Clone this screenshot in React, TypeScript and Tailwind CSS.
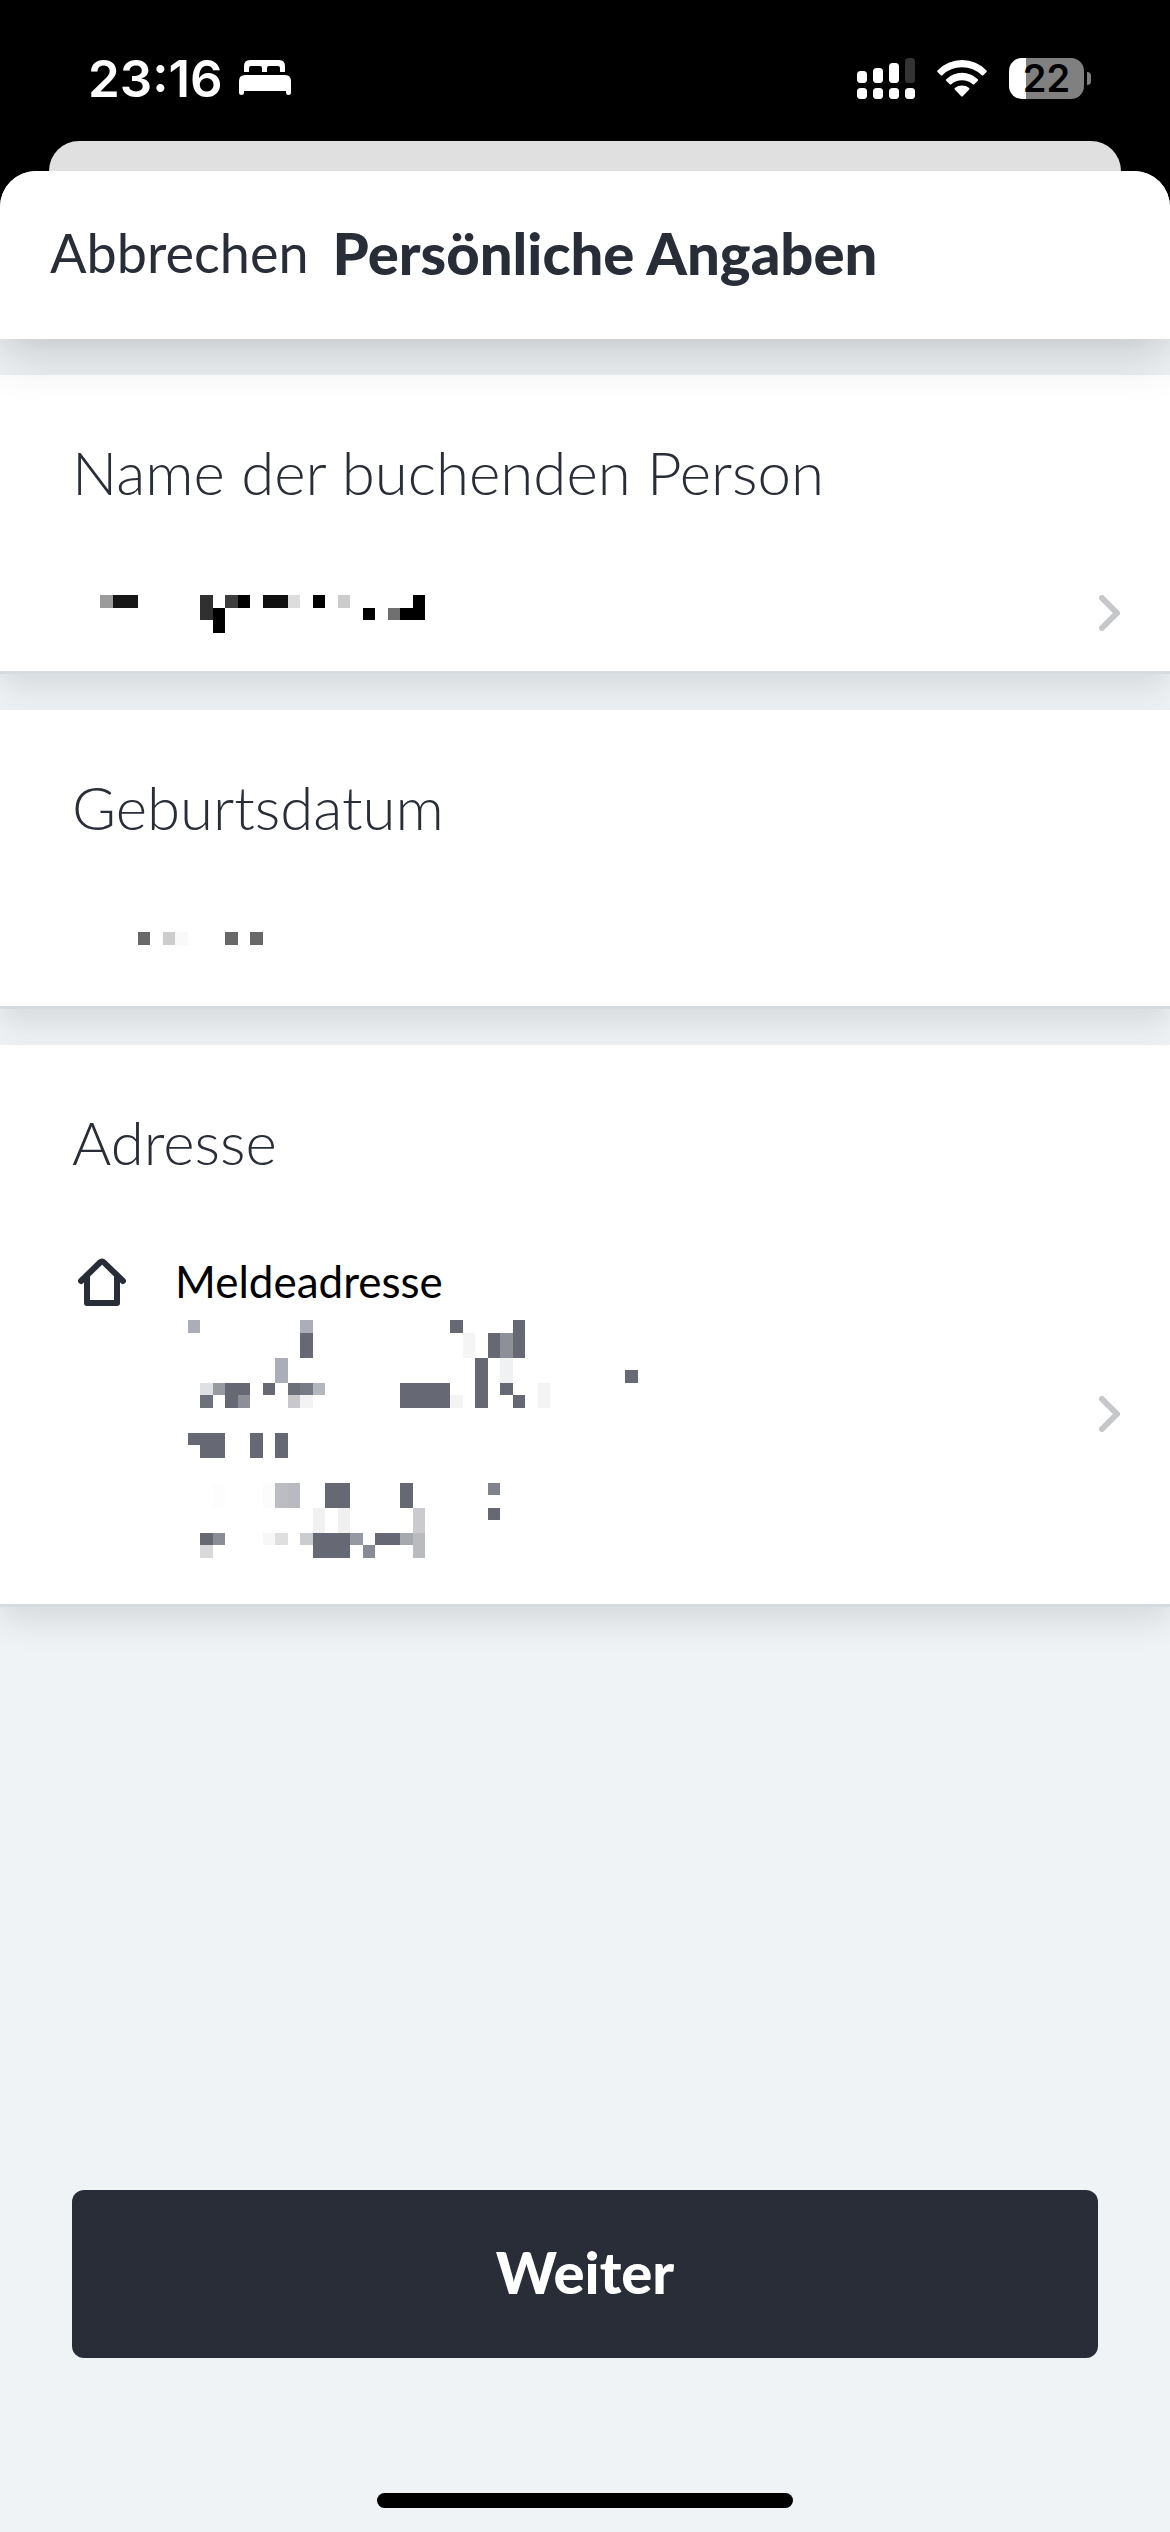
import React from "react";

// column, row, width, height, colour
type Block = [number, number, number, number, string];

const DARK = "#666973";

const nameBlocks: Block[] = [
  [0, 0, 1, 1, "#9b9b9b"],
  [1, 0, 2, 1, "#161616"],
  [8, 0, 1, 2, "#303030"],
  [9, 1, 1, 2, "#000000"],
  [10, 0, 1, 1, "#3d3d3d"],
  [11, 0, 1, 1, "#000000"],
  [13, 0, 2, 1, "#101010"],
  [15, 0, 1, 1, "#dddddd"],
  [17, 0, 1, 1, "#000000"],
  [19, 0, 1, 1, "#cccccc"],
  [21, 1, 1, 1, "#000000"],
  [23, 1, 1, 1, "#707070"],
  [24, 1, 2, 1, "#000000"],
  [25, 0, 1, 1, "#000000"],
];

const birthBlocks: Block[] = [
  [3, 0, 1, 1, "#686868"],
  [5, 0, 1, 1, "#cdcdcd"],
  [6, 0, 1, 1, "#f9f9f9"],
  [10, 0, 1, 1, "#686868"],
  [12, 0, 1, 1, "#686868"],
];

const addressBlocks: Block[] = [
  [1, 0, 1, 1, "#abaeb8"],
  [10, 0, 1, 1, "#abaeb8"],
  [10, 1, 1, 2, DARK],
  [22, 0, 1, 1, DARK],
  [23, 1, 1, 2, "#f5f5f5"],
  [25, 1, 1, 2, DARK],
  [26, 1, 1, 2, "#8d9197"],
  [27, 0, 1, 3, DARK],
  [8, 3, 1, 2, "#abaeb8"],
  [24, 3, 1, 4, DARK],
  [26, 3, 1, 2, "#f0f1f3"],
  [36, 4, 1, 1, DARK],
  [2, 5, 1, 1, "#dfe0e1"],
  [3, 5, 1, 1, "#979aa1"],
  [4, 5, 2, 1, DARK],
  [7, 5, 1, 1, DARK],
  [9, 5, 1, 1, "#6d7079"],
  [10, 5, 1, 1, "#777b85"],
  [11, 5, 1, 1, "#b3b6ba"],
  [18, 5, 4, 2, DARK],
  [26, 5, 1, 1, DARK],
  [29, 5, 1, 2, "#f2f4f3"],
  [2, 6, 1, 1, "#6d717a"],
  [4, 6, 1, 1, DARK],
  [5, 6, 1, 1, "#8c9096"],
  [9, 6, 1, 1, "#c8c8cc"],
  [10, 6, 1, 1, "#f3f3f3"],
  [22, 6, 1, 1, "#f4f4f4"],
  [27, 6, 1, 1, DARK],
  [1, 9, 3, 1, DARK],
  [2, 10, 2, 1, DARK],
  [6, 9, 1, 2, DARK],
  [8, 9, 1, 2, DARK],
  [3, 13, 1, 2, "#fdfdfd"],
  [7, 13, 1, 2, "#fcfcfc"],
  [8, 13, 1, 2, "#bcbdc3"],
  [9, 13, 1, 2, "#b8babf"],
  [12, 13, 2, 2, DARK],
  [18, 13, 1, 2, DARK],
  [25, 13, 1, 1, "#80838b"],
  [11, 15, 1, 2, "#f1f1f1"],
  [13, 15, 1, 2, "#f0f0f0"],
  [19, 15, 1, 2, "#cbcbcf"],
  [25, 15, 1, 1, DARK],
  [2, 17, 1, 1, DARK],
  [3, 17, 1, 1, "#8a8d95"],
  [7, 17, 1, 1, "#f7f7f7"],
  [8, 17, 1, 1, "#dfdfe0"],
  [10, 17, 1, 1, "#cbccd0"],
  [11, 17, 3, 2, DARK],
  [14, 17, 1, 1, "#9699a1"],
  [15, 17, 1, 1, "#fbfbfb"],
  [16, 17, 2, 1, DARK],
  [18, 17, 1, 1, "#a6a9ad"],
  [19, 17, 1, 2, "#b9bbbf"],
  [2, 18, 1, 1, "#d9d9db"],
  [15, 18, 1, 1, "#888b94"],
];

const Redacted: React.FC<{
  blocks: Block[];
  viewBox: string;
  className: string;
}> = ({ blocks, viewBox, className }) => (
  <svg
    viewBox={viewBox}
    className={className}
    shapeRendering="crispEdges"
    aria-hidden="true"
  >
    {blocks.map(([x, y, w, h, fill]) => (
      <rect key={`${x}-${y}`} x={x} y={y} width={w} height={h} fill={fill} />
    ))}
  </svg>
);

const Chevron = () => (
  <svg viewBox="0 0 21 36" className="h-9 w-[21px] shrink-0" fill="none" aria-hidden="true">
    <path
      d="M3 3L18 18L3 33"
      stroke="#c6c7c9"
      strokeWidth="6"
      strokeLinecap="round"
      strokeLinejoin="round"
    />
  </svg>
);

const StatusBar = () => (
  <div className="flex h-[141px] shrink-0 items-center justify-between bg-black pt-[15px] pr-[79px] pl-[88px] text-white">
    <div className="flex items-center gap-4">
      <span className="font-['Inter',sans-serif] text-[51px] leading-none font-semibold">
        23:16
      </span>
      <svg viewBox="0 0 52 36" className="h-9 w-[52px]" fill="currentColor" aria-hidden="true">
        <path d="M5 12V6Q5 0 11 0H40Q46 0 46 6V12H41V8Q41 6 39 6H30Q28 6 28 8V12H23V8Q23 6 21 6H12Q10 6 10 8V12Z" />
        <path d="M6 15H46Q52 15 52 21V33Q52 35 49.500 35Q47 35 47 33V31H5V33Q5 35 2.500 35Q0 35 0 33V21Q0 15 6 15Z" />
      </svg>
    </div>
    <div className="flex items-center gap-[22px]">
      <svg viewBox="0 0 58 41" className="h-[41px] w-[58px]" fill="currentColor" aria-hidden="true">
        <rect x="0" y="13" width="10" height="12" rx="3.500" />
        <rect x="16" y="10" width="10" height="15" rx="3.500" />
        <rect x="32" y="5" width="10" height="20" rx="3.500" />
        <rect x="48" y="0" width="10" height="25" rx="3.500" fill="#333333" />
        <rect x="0" y="30" width="10" height="11" rx="3.500" />
        <rect x="16" y="30" width="10" height="11" rx="3.500" />
        <rect x="32" y="30" width="10" height="11" rx="3.500" />
        <rect x="48" y="30" width="10" height="11" rx="3.500" />
      </svg>
      <svg viewBox="0 0 50 37" className="h-[37px] w-[50px]" fill="currentColor" aria-hidden="true">
        <path d="M0.500 10.500Q10.500 0 25 0Q39.500 0 49.500 10.500Q50.200 11.300 49.500 12L46.300 15.200Q45.500 16 44.700 15.200Q36.500 7.300 25 7.300Q13.500 7.300 5.300 15.200Q4.500 16 3.700 15.200L0.500 12Q-0.200 11.300 0.500 10.500Z" />
        <path d="M9.200 19.200Q15.800 12.700 25 12.700Q34.200 12.700 40.800 19.200Q41.600 20 40.800 20.800L37.300 24.300Q36.500 25 35.700 24.300Q31.200 20.200 25 20.200Q18.800 20.200 14.300 24.300Q13.500 25 12.700 24.300L9.200 20.800Q8.400 20 9.200 19.200Z" />
        <path d="M17.800 28Q20.800 25.600 25 25.600Q29.200 25.600 32.200 28Q33 28.800 32.200 29.600L25.800 36.200Q25 37 24.200 36.200L17.800 29.600Q17 28.800 17.800 28Z" />
      </svg>
      <div className="flex items-center gap-[3px]">
        <div className="flex h-[41px] w-[75px] items-center justify-center rounded-[13px] bg-linear-to-r from-white from-[17px] to-[#808080] to-[17px] font-['Inter',sans-serif] text-[38px] leading-none font-semibold text-black">
          22
        </div>
        <div className="h-[13px] w-1 rounded-r-full bg-[#808080]" />
      </div>
    </div>
  </div>
);

const Card: React.FC<{ title: string; children: React.ReactNode }> = ({
  title,
  children,
}) => (
  <section className="relative border-b-[3px] border-[#d5dbdf] bg-white pt-[57px] pb-[26px] shadow-[0_15px_30px_rgba(0,0,0,0.1)]">
    <h2 className="pb-px pl-[72px] text-[60px] leading-[80px] font-light">{title}</h2>
    {children}
  </section>
);

const App: React.FC = () => {
  return (
    <div className="flex min-h-screen flex-col bg-black font-['Lato',sans-serif] text-[#282d37]">
      <StatusBar />
      <div className="mx-[49px] h-[30px] rounded-t-[30px] bg-[#e0e0e0]" />

      <div className="flex flex-1 flex-col overflow-hidden rounded-t-[36px] bg-[#eff3f6]">
        <header className="relative z-10 flex h-[168px] items-center gap-6 bg-white px-[50px] pb-1 shadow-[0_12px_48px_rgba(0,0,0,0.2)]">
          <button type="button" className="text-[54px] leading-[72px]">
            Abbrechen
          </button>
          <h1 className="text-[58px] leading-[72px] font-black">
            Persönliche Angaben
          </h1>
        </header>

        <main className="flex flex-col gap-9 pt-9">
          <Card title="Name der buchenden Person">
            <button
              type="button"
              aria-label="Name bearbeiten"
              className="flex w-full items-start justify-between pt-[82px] pr-[50px] pl-[100px]"
            >
              <Redacted blocks={nameBlocks} viewBox="0 0 26 4" className="h-[50px] w-[325px]" />
              <Chevron />
            </button>
          </Card>

          <Card title="Geburtsdatum">
            <div className="pt-[84px] pb-[23px] pl-[100px]">
              <Redacted blocks={birthBlocks} viewBox="0 0 16 2" className="h-[25px] w-[200px]" />
            </div>
          </Card>

          <Card title="Adresse">
            <button
              type="button"
              className="flex w-full items-center justify-between pt-[67px] pr-[50px] pl-[78px] text-left"
            >
              <span className="flex items-start gap-[49px] pb-2">
                <svg viewBox="0 0 48 62" className="h-[62px] w-12" fill="none" aria-hidden="true">
                  <path
                    d="M9 27V53H39V27M3 31L22 12.500Q24 10.500 26 12.500L45 31"
                    stroke="#282d37"
                    strokeWidth="6"
                    strokeLinecap="round"
                    strokeLinejoin="round"
                  />
                </svg>
                <span className="flex flex-col gap-2">
                  <span className="text-[44px] leading-[62px] text-black">
                    Meldeadresse
                  </span>
                  <Redacted blocks={addressBlocks} viewBox="0 0 38 20" className="h-[250px] w-[475px]" />
                </span>
              </span>
              <Chevron />
            </button>
          </Card>
        </main>

        <footer className="mt-auto flex flex-col items-center px-[72px] pb-6">
          <button
            type="button"
            className="h-[168px] w-full rounded-xl bg-[#282d37] pb-[6px] text-[58px] font-black text-white"
          >
            Weiter
          </button>
          <div className="mt-[135px] h-[15px] w-[416px] rounded-full bg-black" />
        </footer>
      </div>
    </div>
  );
};

export default App;
